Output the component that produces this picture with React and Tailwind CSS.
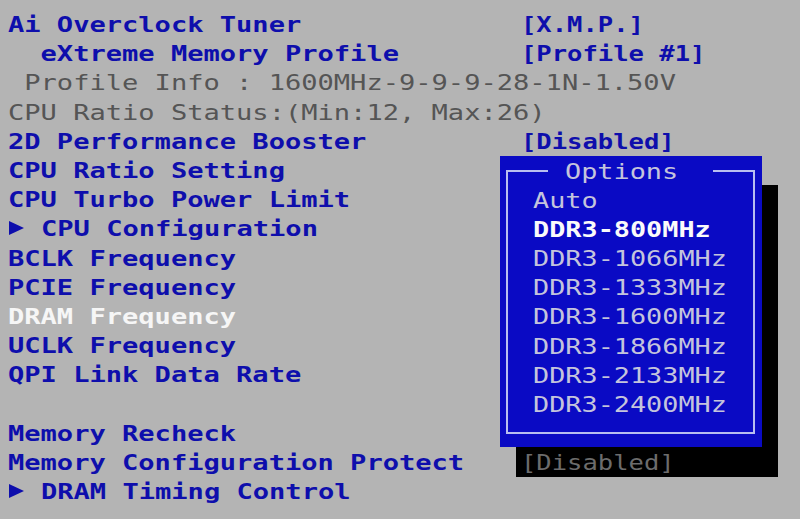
import React from 'react';

const ROWS = [
  { label: 'Ai Overclock Tuner', value: '[X.M.P.]' },
  { label: '  eXtreme Memory Profile', value: '[Profile #1]' },
  { label: ' Profile Info : 1600MHz-9-9-9-28-1N-1.50V', kind: 'grey' },
  { label: 'CPU Ratio Status:(Min:12, Max:26)', kind: 'grey' },
  { label: '2D Performance Booster', value: '[Disabled]' },
  { label: 'CPU Ratio Setting' },
  { label: 'CPU Turbo Power Limit' },
  { label: 'CPU Configuration', arrow: true },
  { label: 'BCLK Frequency' },
  { label: 'PCIE Frequency' },
  { label: 'DRAM Frequency', kind: 'white' },
  { label: 'UCLK Frequency' },
  { label: 'QPI Link Data Rate' },
  { label: '' },
  { label: 'Memory Recheck' },
  { label: 'Memory Configuration Protect', value: '[Disabled]', dim: true },
  { label: 'DRAM Timing Control', arrow: true },
];

const LABEL_STYLE = {
  blue: 'text-[#0e0eac] font-bold',
  grey: 'text-[#555555] font-normal',
  white: 'text-[#f6f6f6] font-bold',
};

const OPTIONS = [
  'Auto',
  'DDR3-800MHz',
  'DDR3-1066MHz',
  'DDR3-1333MHz',
  'DDR3-1600MHz',
  'DDR3-1866MHz',
  'DDR3-2133MHz',
  'DDR3-2400MHz',
];

function Arrow() {
  return (
    <span className="inline-flex w-[32.6px] h-[29.2px] items-center">
      <svg width="15" height="14" viewBox="0 0 15 14" className="ml-[1px] mt-[-1px]">
        <polygon points="0,0 15,7 0,14" fill="#0e0eac" />
      </svg>
    </span>
  );
}

export default function App() {
  return (
    <div className="relative w-[800px] h-[519px] overflow-hidden bg-[#b4b4b4] font-['DejaVu_Sans_Mono',monospace] text-[22px] leading-[29.2px]">
      {/* Setting rows */}
      <div className="flex flex-col pt-[10px] pl-2">
        {ROWS.map((row, i) => (
          <div key={i} className="flex h-[29.2px]">
            <div className="flex w-[513px] shrink-0">
              {row.arrow && <Arrow />}
              <span
                className={`inline-block origin-left scale-x-[1.23] whitespace-pre ${LABEL_STYLE[row.kind || 'blue']}`}
              >
                {row.label}
              </span>
            </div>
            {row.value && (
              <span
                className={
                  row.dim
                    ? 'relative z-20 inline-block origin-left scale-x-[1.16] whitespace-pre font-normal text-[#6c6c6c]'
                    : 'inline-block origin-left scale-x-[1.16] whitespace-pre font-bold text-[#0e0eac]'
                }
              >
                {row.value}
              </span>
            )}
          </div>
        ))}
      </div>

      {/* Drop shadow */}
      <div className="absolute left-[516px] top-[184.5px] w-[262px] h-[292px] bg-black z-10" />

      {/* Options popup */}
      <div className="absolute left-[500px] top-[156px] w-[262px] h-[291px] bg-[#0a0ac4] z-30">
        <div className="absolute left-[6px] top-[14px] right-[7px] bottom-[13px] border-2 border-[#b8bef0]" />
        <div className="flex flex-col pt-[0.5px]">
          <div className="flex h-[29.2px]">
            <div className="relative ml-[48px] w-[165px] pl-[17px] bg-[#0a0ac4]">
              <span className="inline-block origin-left scale-x-[1.22] whitespace-pre font-normal text-[#c4c4dc]">
                Options
              </span>
            </div>
          </div>
          {OPTIONS.map((opt, i) => (
            <div key={opt} className="flex h-[29.2px] pl-[33px]">
              <span
                className={
                  i === 1
                    ? 'inline-block origin-left scale-x-[1.22] whitespace-pre font-bold text-[#fafafa]'
                    : 'inline-block origin-left scale-x-[1.22] whitespace-pre font-normal text-[#c4c4dc]'
                }
              >
                {opt}
              </span>
            </div>
          ))}
        </div>
      </div>
    </div>
  );
}
